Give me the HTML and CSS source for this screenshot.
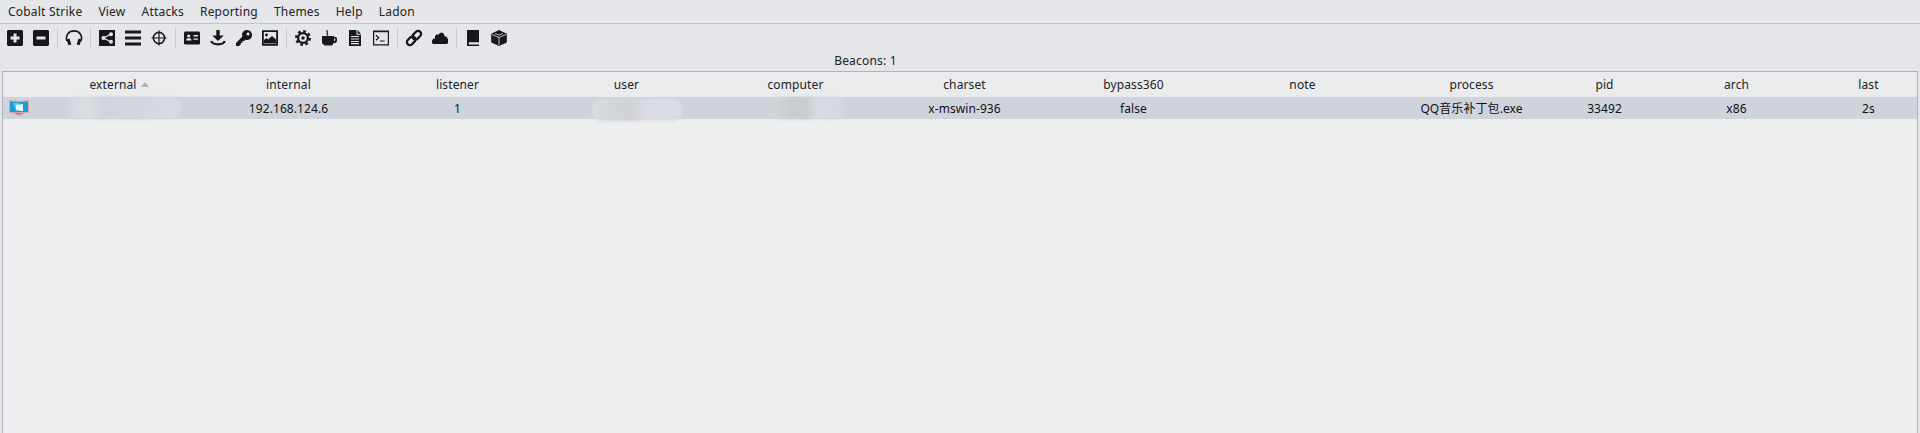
FILE: index.html
```html
<!DOCTYPE html>
<html lang="en">
<head>
<meta charset="utf-8">
<title>Cobalt Strike</title>
<link rel="stylesheet" href="styles.css">
</head>
<body>
<nav class="menu"><span>Cobalt Strike</span><span>View</span><span>Attacks</span><span>Reporting</span><span>Themes</span><span>Help</span><span>Ladon</span></nav>
<div class="toolbar">
<svg class="tool" viewBox="0 0 16 16"><path fill-rule="evenodd" d="M1 0h14l1 1v14l-1 1H1l-1-1V1zM6.500 3.500v3h-3v3h3v3h3v-3h3v-3h-3v-3z"/></svg>
<svg class="tool" viewBox="0 0 16 16"><path fill-rule="evenodd" d="M1 0h14l1 1v14l-1 1H1l-1-1V1zM3.500 6.500v3h9v-3z"/></svg>
<i class="sep"></i>
<svg class="tool" viewBox="0 0 16 16"><path class="line" d="M1 11C-1 5 3 .9 8 .9S17 5 15 11"/><path d="M.5 9.500l3-1 1.800 6-2.800.8zM15.500 9.500l-3-1-1.800 6 2.800.8z"/></svg>
<i class="sep"></i>
<svg class="tool" viewBox="0 0 16 16"><path d="M0 0h16v16H0z"/><g class="light"><path class="hair" d="M12 4L4.500 8l7.500 4"/><circle cx="4.500" cy="8" r="2.100"/><circle cx="12" cy="4.200" r="2"/><circle cx="12" cy="11.800" r="2"/></g></svg>
<svg class="tool" viewBox="0 0 16 16"><path d="M0 .5h16v3H0zM0 6.500h16v3H0zM0 12.500h16v3H0z"/></svg>
<svg class="tool" viewBox="0 0 16 16"><circle class="line" cx="8" cy="8" r="5.600"/><path class="hair" d="M8 .5v15M.5 8h15"/></svg>
<i class="sep"></i>
<svg class="tool" viewBox="0 0 16 16"><path d="M1 1.500h14l1 1v11l-1 1H1l-1-1v-11z"/><g class="light"><circle cx="4.700" cy="6" r="1.600"/><path d="M2.200 10.500V9.300l1.300-1h2.500l1.300 1v1.200zM9.500 5H14v1.500H9.500zM9.500 8.500H14v1.300H9.500z"/></g></svg>
<svg class="tool" viewBox="0 0 16 16"><path d="M6.300 0h3.400v5.500h4L8 11 2.300 5.500h4z"/><path class="bold" d="M1.200 11c1 3 3 3.300 6.800 3.300s5.800-.3 6.800-3.300"/></svg>
<svg class="tool" viewBox="0 0 16 16"><path fill-rule="evenodd" d="M10.700 0a5 5 0 1 1-1.200 9.700L8.200 11H6.500v1.700H4.800v1.700L3 16H0v-3l6.200-6.200A5 5 0 0 1 10.700 0zM12 2.500a1.500 1.500 0 1 0 .1 0z"/></svg>
<svg class="tool" viewBox="0 0 16 16"><path fill-rule="evenodd" d="M0 .2h16v15.600H0zM1.800 2v12h12.400V2z"/><circle cx="4.500" cy="5" r="1.400"/><path d="M2 13.500V10l2.500-2L6 9.500l4-3.500 4 3.500v4z"/></svg>
<i class="sep"></i>
<svg class="tool" viewBox="0 0 16 16"><circle class="dash" cx="8" cy="8" r="6.800"/><circle class="bold" cx="8" cy="8" r="4.900"/><circle cx="8" cy="8" r="1.700"/></svg>
<svg class="tool" viewBox="0 0 16 16"><path fill-rule="evenodd" d="M1 6h12v1h1.500a1.500 1.500 0 0 1 1.500 1.500v2A2.500 2.500 0 0 1 12.800 13L11 15.500H3.500L1 13zM13 8.500v2.700l1.200-1V8.500z"/><path class="hair" d="M7 5.500C4.500 3.500 8 2.500 5.500.3"/></svg>
<svg class="tool" viewBox="0 0 16 16"><path d="M2 0h7.500v4.800H14V16H2zM10.500 0L14 3.800h-3.500z"/><path class="light hair" d="M4 6.500h8M4 9h8M4 11.500h8M4 13.700h8"/></svg>
<svg class="tool" viewBox="0 0 16 16"><path fill-rule="evenodd" d="M0 .5h16v15H0zM1.200 2.200v12h13.600v-12z"/><path class="hair" d="M3 5.300l2.700 2.500L3 10.300M7 11h4.500"/></svg>
<i class="sep"></i>
<svg class="tool" viewBox="0 0 16 16"><g transform="rotate(-45 8 8)"><rect class="bold" x="-.8" y="5" width="9.600" height="6" rx="3"/><rect class="bold" x="7.200" y="5" width="9.600" height="6" rx="3"/></g></svg>
<svg class="tool" viewBox="0 0 16 16"><path d="M1 14l-1-1v-2.500l1.500-2H3V6l1.500-1.500h2L8 3l2-.5 2 1.500.7 2.500h1.500L16 9v4l-1 1z"/></svg>
<i class="sep"></i>
<svg class="tool" viewBox="0 0 16 16"><path d="M2 0h12v12.300H3.800v2.200H14V16H2z"/></svg>
<svg class="tool" viewBox="0 0 16 16"><path d="M8 0l7.800 3.800v8.700L8 16 .2 12.500V3.800z"/><path class="light hair thin" d="M1 4.500L8 7.500l7-3M8 7.500V15M4 3.500l4 1.600 4-1.600"/></svg>
</div>
<h1 class="title">Beacons: 1</h1>
<main class="table">
<div class="row head"><span></span><span>external<i class="arrow"></i></span><span>internal</span><span>listener</span><span>user</span><span>computer</span><span>charset</span><span>bypass360</span><span>note</span><span>process</span><span>pid</span><span>arch</span><span>last</span></div>
<div class="row beacon">
<span class="host"><svg width="20" height="17" viewBox="0 0 20 17"><path fill="#d9a3ad" d="M0 0l10 1L20 0v13h-4l-5 3H9l-5-3H0z"/><path fill="#149fd0" d="M1 1.500l9 .8 9-.8V12H1z"/><path fill="#57c7e6" d="M4 3h6l4 8H7z"/><path fill="#eefaff" d="M7 5l3-.4v2.800H7zM10 4.500l4-.5v3.400h-4zM7 7.400h3v2.800l-3-.4zM10 7.400h4V11l-4-.5z"/><path fill="#8c8790" d="M7 13h6v1H7z"/></svg></span>
<span><i class="smudge wide"></i></span><span>192.168.124.6</span><span>1</span><span><i class="smudge user"></i></span><span><i class="smudge pc"></i></span><span>x-mswin-936</span><span>false</span><span></span><span>QQ音乐补丁包.exe</span><span>33492</span><span>x86</span><span>2s</span></div>
</main>
</body>
</html>
```
FILE: styles.css
```css
* { box-sizing: border-box; }
body {
  margin: 0;
  height: 433px;
  overflow: hidden;
  display: flex;
  flex-direction: column;
  background: #e5e6e9;
  color: #222326;
  font: 12px/16px "Noto Sans", "Noto Sans CJK SC", sans-serif;
}
.menu {
  height: 24px;
  padding: 4px 8px 0;
  display: flex;
  gap: 16px;
  letter-spacing: .21px;
  border-bottom: 1px solid #c3c4cb;
}
.toolbar {
  height: 29px;
  padding: 0 0 1px 2px;
  display: flex;
  align-items: center;
}
.tool { width: 16px; height: 16px; margin: 0 5px; fill: #17181b; overflow: visible; }
.line, .hair, .bold, .dash { fill: none; stroke: #17181b; stroke-width: 1.6; }
.hair { stroke-width: 1.2; }
.thin { stroke-width: .8; }
.bold { stroke-width: 2.3; }
.dash { stroke-width: 2.4; stroke-dasharray: 2.7 2.64; }
.light { fill: #e5e6e9; }
.light .hair, .light.hair { stroke: #e5e6e9; }
.light.hair { fill: none; }
.sep { width: 1px; height: 20px; margin: 0 3px; background: #c9cad3; }
.title { margin: 0; height: 18px; font-size: 12px; font-weight: 400; line-height: 15px; letter-spacing: .2px; text-align: center; padding-right: 189px; }
.table {
  flex: 1;
  margin: 0 2px;
  border: 1px solid #b0b3ba;
  border-width: 1px 1px 0;
  background: #eceef0;
}
.row {
  display: grid;
  grid-template-columns: 32px repeat(9, 169px) 97px 167px 1fr;
  text-align: center;
}
.head { height: 25px; line-height: 25px; letter-spacing: .12px; background: #e9ebed; }
.beacon { height: 22px; line-height: 23px; letter-spacing: .08px; background: #cfd4dc; color: #111215; }
.arrow { display: inline-block; margin: 0 1px 2px 4px; border: 4px solid transparent; border-top: 0; border-bottom: 5px solid #b3b5b8; }
.host { padding: 3px 0 0 6px; text-align: left; line-height: 0; }
.smudge { display: block; height: 22px; border-radius: 9px; filter: blur(1.5px); }
.wide { width: 115px; margin-left: 31px; background: linear-gradient(90deg, #d2d6dd, #dadce0 18%, #d0d4dc 35%, #d3d7dd 65%, #d8dbe1); }
.user { width: 90px; margin: 2px 0 0 50px; background: linear-gradient(90deg, #d8dbe2, #d3d5d9 25%, #d0d2d5 42%, #d9dae3 60%, #dadde4); }
.pc { width: 75px; margin-left: 59px; background: linear-gradient(90deg, #d2d6dc, #c9cccf 30%, #caccd0 50%, #d7dae2 60%, #d2d7df); }
```
